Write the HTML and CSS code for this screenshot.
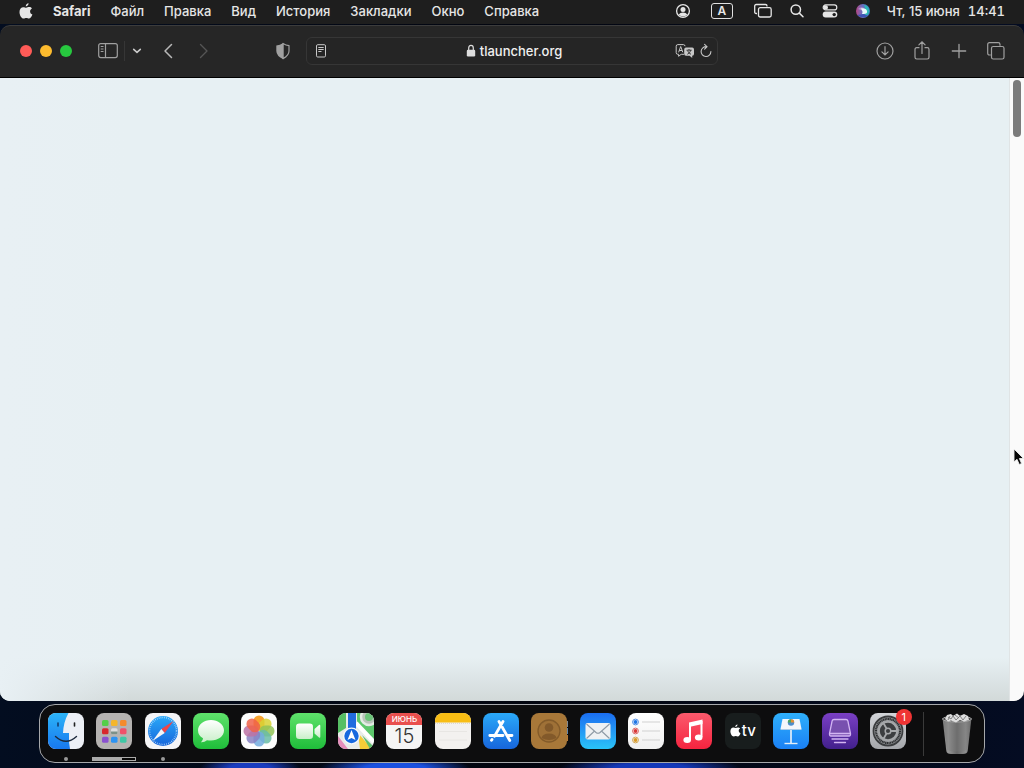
FILE: index.html
```html
<!DOCTYPE html>
<html lang="ru">
<head>
<meta charset="utf-8">
<meta name="viewport" content="width=device-width, initial-scale=1">
<title>tlauncher.org</title>
<link rel="stylesheet" href="styles.css">
</head>
<body>
<svg class="defs" aria-hidden="true">
  <defs>
    <symbol id="apple" viewBox="0 0 14 16"><path d="M9.6 0.3C9.7 1.6 8.5 3.4 6.8 3.4 6.6 2 8 .5 9.6.3ZM12.9 5.4C11.5 6.3 11 7.2 11.1 8.4 11.1 10 12 10.9 13.4 11.5 12.7 13.5 11.4 15.6 9.9 15.6 9 15.6 8.4 15 7.3 15 6.2 15 5.6 15.6 4.7 15.6 2.4 15.6.5 12 .5 9 .5 6 2.2 4.2 4.3 4.2 5.5 4.2 6.3 4.8 7.2 4.8 8 4.8 9 4.1 10.2 4.1 11.4 4.1 12.3 4.6 12.9 5.4Z" fill="currentColor"/></symbol>
    <linearGradient id="green" x2="0" y2="1"><stop stop-color="#5fe26b"/><stop offset="1" stop-color="#1fbd3a"/></linearGradient>
    <linearGradient id="white" x2="0" y2="1"><stop stop-color="#fff"/><stop offset="1" stop-color="#f0f0f0"/></linearGradient>
    <linearGradient id="bubble" x2="0" y2="1"><stop stop-color="#fff"/><stop offset="1" stop-color="#c9efc9"/></linearGradient>
    <linearGradient id="sky" x2="0" y2="1"><stop stop-color="#2aa9f8"/><stop offset="1" stop-color="#1766dc"/></linearGradient>
    <linearGradient id="keynote" x2="0" y2="1"><stop stop-color="#2fb0fb"/><stop offset="1" stop-color="#1a80f5"/></linearGradient>
    <linearGradient id="mail" x2="0" y2="1"><stop stop-color="#1b6df0"/><stop offset="1" stop-color="#2ac4f8"/></linearGradient>
    <linearGradient id="finder" x2="0" y2="1"><stop stop-color="#2cb4f8"/><stop offset="1" stop-color="#1878ef"/></linearGradient>
    <linearGradient id="red" x2="0" y2="1"><stop stop-color="#fb5a6c"/><stop offset="1" stop-color="#f5243f"/></linearGradient>
    <linearGradient id="violet" x2="0" y2="1"><stop stop-color="#7a3fc4"/><stop offset="1" stop-color="#42208c"/></linearGradient>
    <linearGradient id="steel" x2="0" y2="1"><stop stop-color="#d2d4d8"/><stop offset="1" stop-color="#a5a7ab"/></linearGradient>
    <linearGradient id="siri" x2="1" y2="0"><stop stop-color="#c2407c"/><stop offset=".45" stop-color="#6a6fc0"/><stop offset="1" stop-color="#2f83c4"/></linearGradient>
    <linearGradient id="can" x2="1" y2="0"><stop stop-color="#777"/><stop offset=".2" stop-color="#969696"/><stop offset=".5" stop-color="#686868"/><stop offset=".8" stop-color="#8e8e8e"/><stop offset="1" stop-color="#666"/></linearGradient>
    <clipPath id="tile"><rect width="36" height="36" rx="8"/></clipPath>
    <clipPath id="disc"><circle cx="8" cy="8" r="7"/></clipPath>
  </defs>
</svg>

<div class="desktop">
  <header class="menubar">
    <nav class="menus">
      <button class="menu apple" aria-label="Apple"><svg width="14" height="16"><use href="#apple"/></svg></button>
      <button class="menu app-name">Safari</button>
      <button class="menu">Файл</button>
      <button class="menu">Правка</button>
      <button class="menu">Вид</button>
      <button class="menu">История</button>
      <button class="menu">Закладки</button>
      <button class="menu">Окно</button>
      <button class="menu">Справка</button>
    </nav>
    <div class="status">
      <button aria-label="Пользователь"><svg width="16" height="16" viewBox="0 0 16 16"><circle cx="8" cy="8" r="6.4" fill="none" stroke="currentColor" stroke-width="1.3"/><circle cx="8" cy="6.4" r="2.5" fill="currentColor"/><path d="M3.7 11.6Q5 9.6 8 9.6T12.3 11.6Q10.5 13.5 8 13.5T3.7 11.6Z" fill="currentColor"/></svg></button>
      <button class="layout">A</button>
      <button aria-label="Повтор экрана"><svg width="20" height="16" viewBox="0 0 20 16" fill="none" stroke="currentColor" stroke-width="1.3"><path d="M4 10.5H3.2Q1.7 10.5 1.7 9V3Q1.7 1.5 3.2 1.5H12.5Q14 1.5 14 3V3.4"/><rect x="5.5" y="4.7" width="12.7" height="9.3" rx="1.7"/></svg></button>
      <button aria-label="Поиск"><svg width="16" height="16" viewBox="0 0 16 16" fill="none" stroke="currentColor" stroke-width="1.5"><circle cx="6.8" cy="6.6" r="4.7"/><path d="M10.3 10.1 14 13.8" stroke-linecap="round"/></svg></button>
      <button aria-label="Пункт управления"><svg width="18" height="16" viewBox="0 0 18 16"><rect x="2.2" y="1.9" width="13.6" height="5" rx="2.5" fill="none" stroke="currentColor" stroke-width="1.2"/><circle cx="4.8" cy="4.4" r="2.2" fill="currentColor"/><rect x="1.7" y="8.6" width="14.6" height="6" rx="3" fill="currentColor"/><circle cx="13.2" cy="11.6" r="1.7" fill="#1e1e1e"/></svg></button>
      <button aria-label="Siri"><svg width="16" height="16" viewBox="0 0 16 16"><g clip-path="url(#disc)"><path fill="url(#siri)" d="M0 0h16v16H0z"/><path d="M9 2Q14 3 14 8T9 12Q12 8 9 2Z" fill="#2cb9b4"/><path d="M2 12Q7 16 13 13L9 11Z" fill="#3d53b5"/><path d="M3 6Q6 3 9 5L8 8Z" fill="#b58cc4"/><path d="M5.5 5.5Q11 4.5 12 8T7 11Q8.5 8 5.5 5.5Z" fill="#e8f8fc"/></g></svg></button>
      <button class="clock"><span>Чт, 15 июня</span><time>14:41</time></button>
    </div>
  </header>

  <main class="window">
    <div class="toolbar">
      <div class="tools-left">
        <div class="lights">
          <button class="light close" aria-label="Закрыть"></button>
          <button class="light minimize" aria-label="Свернуть"></button>
          <button class="light expand" aria-label="Развернуть"></button>
        </div>
        <div class="sidebar-tools">
          <button class="tool" aria-label="Боковая панель"><svg width="20" height="18" viewBox="0 0 20 18" fill="none" stroke="currentColor" stroke-width="1.2"><rect x=".7" y="1.6" width="18.6" height="14" rx="2"/><path d="M7.5 1.6V15.6M2.7 4.5H5.5M2.7 7H5.5M2.7 9.5H5.5"/></svg></button>
          <span class="divider"></span>
          <button class="tool narrow" aria-label="Группы вкладок"><svg width="10" height="8" viewBox="0 0 10 8" fill="none" stroke="#c8c8c8" stroke-width="1.6" stroke-linecap="round" stroke-linejoin="round"><path d="M1.7 2.3 5 5.3 8.3 2.3"/></svg></button>
        </div>
        <div class="history">
          <button class="tool back" aria-label="Назад"><svg width="10" height="16" viewBox="0 0 10 16" fill="none" stroke="currentColor" stroke-width="1.5" stroke-linecap="round" stroke-linejoin="round"><path d="M8.5 1.5 2 8 8.5 14.5"/></svg></button>
          <button class="tool forward" aria-label="Вперёд" disabled><svg width="10" height="16" viewBox="0 0 10 16" fill="none" stroke="currentColor" stroke-width="1.4" stroke-linecap="round" stroke-linejoin="round"><path d="M1.5 1.5 8 8 1.5 14.5"/></svg></button>
        </div>
        <button class="tool shield" aria-label="Отчёт о конфиденциальности"><svg width="16" height="18" viewBox="0 0 16 18"><path d="M8 1.4Q11 3.2 14 3.6V9Q14 13.5 8 16.6Z" fill="none" stroke="currentColor" stroke-width="1.2" stroke-linejoin="round"/><path d="M8.3.9Q5 3.1 1.3 3.6V9Q1.3 14 8.3 17.2Z" fill="currentColor"/></svg></button>
      </div>
      <div class="address">
        <button class="mini" aria-label="Режим чтения"><svg width="12" height="14" viewBox="0 0 12 14" fill="none" stroke="currentColor"><rect x="1.5" y=".7" width="9" height="12.3" rx="1.2"/><path d="M3.3 3.5H8.7M3.3 5.5H8.7M3.3 7.5H6.5"/></svg></button>
        <button class="site"><svg width="10" height="14" viewBox="0 0 10 14"><rect x=".8" y="5.8" width="8.4" height="6.7" rx="1.2" fill="#dedede"/><path d="M2.7 6V4Q2.7 1.4 5 1.4T7.3 4V6" fill="none" stroke="#dedede" stroke-width="1.2"/></svg><span>tlauncher.org</span></button>
        <div class="page-tools">
          <button class="mini" aria-label="Перевести"><svg width="20" height="16" viewBox="0 0 20 16"><path d="M9 11.3H6.2L3.6 13.3V11.3H2.8Q1.2 11.3 1.2 9.7V3.2Q1.2 1.6 2.8 1.6H8.4Q10 1.6 10 3.2" fill="none" stroke="currentColor"/><path d="M3.6 9.3 5.7 3.5 7.8 9.3M4.3 7.5H7.1" fill="none" stroke="currentColor"/><path d="M11 4.6H17.2Q19 4.6 19 6.4V11Q19 12.8 17.2 12.8V15L14.6 12.8H11Q9.2 12.8 9.2 11V6.4Q9.2 4.6 11 4.6Z" fill="currentColor"/><path d="M11.5 7.2H16.7M14 6V7.2M12.3 11.3Q15.4 9.8 15.7 7.2M12.5 7.6Q13.5 10.2 16 11.3" fill="none" stroke="#2a2a2a" stroke-width=".9"/></svg></button>
          <button class="mini" aria-label="Обновить"><svg width="14" height="16" viewBox="0 0 14 16" fill="none" stroke="currentColor" stroke-width="1.1" stroke-linecap="round"><path d="M7.5 3.7A4.9 4.9 0 1 0 11.9 8.6M5.6 1.4 8 3.7 5.6 6.1"/></svg></button>
        </div>
      </div>
      <div class="tools-right">
        <button class="tool" aria-label="Загрузки"><svg width="20" height="20" viewBox="0 0 20 20" fill="none" stroke="currentColor" stroke-width="1.2" stroke-linecap="round"><circle cx="10" cy="10" r="8"/><path d="M10 5.7V13.7M6.9 10.9 10 14 13.1 10.9"/></svg></button>
        <button class="tool" aria-label="Поделиться"><svg width="18" height="22" viewBox="0 0 18 22" fill="none" stroke="currentColor" stroke-width="1.2" stroke-linecap="round"><path d="M6 7.7H3.7Q2 7.7 2 9.4V17.3Q2 19 3.7 19H14.3Q16 19 16 17.3V9.4Q16 7.7 14.3 7.7H12M9 13.5V2M5.9 4.9 9 1.8 12.1 4.9"/></svg></button>
        <button class="tool" aria-label="Новая вкладка"><svg width="16" height="16" viewBox="0 0 16 16" stroke="currentColor" stroke-width="1.3" stroke-linecap="round"><path d="M8 1.3V14.7M1.3 8H14.7"/></svg></button>
        <button class="tool" aria-label="Обзор вкладок"><svg width="20" height="20" viewBox="0 0 20 20" fill="none" stroke="currentColor" stroke-width="1.2"><path d="M4.8 14H3.5Q1.7 14 1.7 12.2V3.5Q1.7 1.7 3.5 1.7H12.2Q14 1.7 14 3.5V4.8"/><rect x="5.5" y="5.5" width="12.5" height="12.5" rx="1.8"/></svg></button>
      </div>
    </div>
    <div class="viewport">
      <div class="page"></div>
      <div class="scrollbar"><div class="thumb"></div></div>
    </div>
  </main>

  <footer class="dock-area">
    <div class="dock">
      <div class="apps">
        <button class="app running" aria-label="Finder"><svg viewBox="0 0 36 36"><g clip-path="url(#tile)"><path fill="#eceff5" d="M0 0h36v36H0z"/><path d="M0 0H20.5Q15.5 9 15 20H21Q20.5 29 22 36H0Z" fill="url(#finder)"/></g><path d="M10 10V13" stroke="#123d70" stroke-width="1.6" stroke-linecap="round"/><path d="M26.5 10V13" stroke="#222" stroke-width="1.6" stroke-linecap="round"/><path d="M7.5 23.5Q18 33 28.5 23.5" fill="none" stroke="#1d2a3c" stroke-width="1.4" stroke-linecap="round"/></svg></button>
        <button class="app" aria-label="Launchpad"><svg viewBox="0 0 36 36"><rect width="36" height="36" rx="8" fill="#b5b3b1"/><rect x="6" y="7" width="6.5" height="6" rx="1.5" fill="#54cf49"/><rect x="15" y="7" width="6.5" height="6" rx="1.5" fill="#f5b62b"/><rect x="24" y="7" width="6.5" height="6" rx="1.5" fill="#f58b2b"/><rect x="6" y="15.3" width="6.5" height="6" rx="1.5" fill="#d8282e"/><rect x="15" y="15.3" width="6.5" height="6" rx="1.5" fill="#dedede"/><path d="M15 18.5H21.5V20Q21.5 21.3 20 21.3H16.5Q15 21.3 15 20Z" fill="#7c9189"/><rect x="24" y="15.3" width="6.5" height="6" rx="1.5" fill="#f0506a"/><rect x="6" y="23.7" width="6.5" height="6" rx="1.5" fill="#8a51cf"/><rect x="15" y="23.7" width="6.5" height="6" rx="1.5" fill="#2d93f2"/><rect x="24" y="23.7" width="6.5" height="6" rx="1.5" fill="#3fc7a5"/></svg><span class="progress"></span></button>
        <button class="app running" aria-label="Safari"><svg viewBox="0 0 36 36"><rect width="36" height="36" rx="8" fill="#f5f5f7"/><circle cx="18" cy="18" r="15" fill="url(#sky)"/><circle cx="18" cy="18" r="13.5" fill="none" stroke="#c9e4fb" stroke-width="1.6" stroke-dasharray=".6 1.3"/><path d="M28.5 8 16.3 16 19.7 20Z" fill="#ef4648"/><path d="M7.5 28 16.3 16 19.7 20Z" fill="#f4f6f8"/></svg></button>
        <button class="app" aria-label="Сообщения"><svg viewBox="0 0 36 36"><rect width="36" height="36" rx="8" fill="url(#green)"/><path d="M18 7C25 7 31 11.3 31 17.3S25 27.6 18 27.6Q15.8 27.6 14 27.2 11.5 29.5 8 29.3 10 27.6 10 25.3 5 22.5 5 17.3C5 11.3 11 7 18 7Z" fill="url(#bubble)"/></svg></button>
        <button class="app" aria-label="Фото"><svg viewBox="0 0 36 36"><rect width="36" height="36" rx="8" fill="#fdfdfd"/><g opacity=".9"><rect x="12.5" y="2.5" width="11" height="15" rx="5.5" fill="#f79b1c"/><rect x="12.5" y="2.5" width="11" height="15" rx="5.5" fill="#d5cf20" fill-opacity=".85" transform="rotate(45 18 18)"/><rect x="12.5" y="2.5" width="11" height="15" rx="5.5" fill="#87bd45" fill-opacity=".85" transform="rotate(90 18 18)"/><rect x="12.5" y="2.5" width="11" height="15" rx="5.5" fill="#5ab69e" fill-opacity=".85" transform="rotate(135 18 18)"/><rect x="12.5" y="2.5" width="11" height="15" rx="5.5" fill="#65a3dc" fill-opacity=".85" transform="rotate(180 18 18)"/><rect x="12.5" y="2.5" width="11" height="15" rx="5.5" fill="#7c75bd" fill-opacity=".85" transform="rotate(225 18 18)"/><rect x="12.5" y="2.5" width="11" height="15" rx="5.5" fill="#b6649b" fill-opacity=".85" transform="rotate(270 18 18)"/><rect x="12.5" y="2.5" width="11" height="15" rx="5.5" fill="#ee5136" fill-opacity=".85" transform="rotate(315 18 18)"/></g></svg></button>
        <button class="app" aria-label="FaceTime"><svg viewBox="0 0 36 36"><rect width="36" height="36" rx="8" fill="url(#green)"/><rect x="6" y="10.5" width="17" height="15.5" rx="3.3" fill="url(#bubble)"/><path d="M24.5 16 29 12Q30.3 11.3 30.3 12.8V23.7Q30.3 25.2 29 24.5L24.5 20.5Z" fill="url(#bubble)"/></svg></button>
        <button class="app" aria-label="Карты"><svg viewBox="0 0 36 36"><g clip-path="url(#tile)"><path fill="#e9ece9" d="M0 0h36v36H0z"/><path d="M0 0H8V15L0 20Z" fill="#56bf63"/><path d="M19 0H36V29L19 12Z" fill="#5dc76c"/><circle cx="31" cy="4" r="8" fill="#b9c4ba" stroke="#e4ebe4" stroke-width="2.5"/><circle cx="31" cy="4" r="4" fill="#6cc479"/><path d="M18 10 36 29" stroke="#fff" stroke-width="4"/><path d="M20 20 34 36H22Z" fill="#f4cc37"/><path d="M24 22 36 34V36H32Z" fill="#60bd6c"/><path d="M0 23 10 36H0Z" fill="#e58dbb"/><path d="M10 0H18V20H10Z" fill="#216bdf"/></g><circle cx="13.5" cy="23" r="8.5" fill="#f5f8fb"/><circle cx="13.5" cy="23" r="7.2" fill="#1769df"/><path d="M13.5 17 17.5 27 13.5 25 9.5 27Z" fill="#fff"/></svg></button>
        <button class="app calendar" aria-label="Календарь"><span class="month">ИЮНЬ</span><span class="day">15</span></button>
        <button class="app" aria-label="Заметки"><svg viewBox="0 0 36 36"><g clip-path="url(#tile)"><path fill="#f3f1ef" d="M0 0h36v36H0z"/><path fill="#f8bd14" d="M0 0h36v9.5H0z"/><path d="M0 10.5H36" stroke="#dad6cf" stroke-dasharray="1 1"/><path d="M4 18.5H32M4 27H32" stroke="#e8e6e3"/></g></svg></button>
        <button class="app" aria-label="App Store"><svg viewBox="0 0 36 36"><rect width="36" height="36" rx="8" fill="url(#sky)"/><g fill="none" stroke="#fff" stroke-width="2.8" stroke-linecap="round"><path d="M16 8.5 26.8 27.5M20 8.5 11.5 23.3M6.8 22.5H20M25.5 22.5H29M9 26.5 8.5 27.3"/></g></svg></button>
        <button class="app" aria-label="Контакты"><svg viewBox="0 0 36 36"><path d="M33 8H37V14H33Z" fill="#818b94"/><path d="M33 15H37V21H33Z" fill="#6287ad"/><path d="M33 22H37V28H33Z" fill="#b77a36"/><rect width="36" height="36" rx="8" fill="#a87839"/><circle cx="18" cy="18" r="11" fill="#9f7137" stroke="#835b2a" stroke-width="1.3"/><circle cx="18" cy="14.5" r="4.3" fill="#82592a"/><path d="M10.5 25Q11.5 20.5 18 20.5T25.5 25Q18 29 10.5 25Z" fill="#82592a"/></svg></button>
        <button class="app" aria-label="Почта"><svg viewBox="0 0 36 36"><rect width="36" height="36" rx="8" fill="url(#mail)"/><rect x="5.5" y="10" width="25" height="16.5" rx="2" fill="#eef1f3"/><path d="M6.5 11 16 19.5Q18 21 20 19.5L29.5 11M6.5 25.5 14 18.5M29.5 25.5 22 18.5" fill="none" stroke="#8d9aa5" stroke-width="1.1"/></svg></button>
        <button class="app" aria-label="Напоминания"><svg viewBox="0 0 36 36"><rect width="36" height="36" rx="8" fill="url(#white)"/><path d="M14 9H32M14 18H32M14 27H32" stroke="#d1d1d1"/><g fill="none" stroke-width="1"><circle cx="7.5" cy="9" r="2.9" stroke="#4e8fe8"/><circle cx="7.5" cy="18" r="2.9" stroke="#dd6464"/><circle cx="7.5" cy="27" r="2.9" stroke="#d6a64e"/></g><circle cx="7.5" cy="9" r="1.9" fill="#1f75e5"/><circle cx="7.5" cy="18" r="1.9" fill="#d93838"/><circle cx="7.5" cy="27" r="1.9" fill="#d99a26"/></svg></button>
        <button class="app" aria-label="Музыка"><svg viewBox="0 0 36 36"><rect width="36" height="36" rx="8" fill="url(#red)"/><path d="M13 9.5 26.5 6.5V11L13 14Z" fill="#fff"/><path d="M14 10V27M25.5 8V24" stroke="#fff" stroke-width="2"/><ellipse cx="11.2" cy="27" rx="3.8" ry="3" fill="#fff"/><ellipse cx="22.7" cy="24.5" rx="3.8" ry="3" fill="#fff"/></svg></button>
        <button class="app tv" aria-label="Apple TV"><svg><use href="#apple"/></svg><span>tv</span></button>
        <button class="app" aria-label="Keynote"><svg viewBox="0 0 36 36"><rect width="36" height="36" rx="8" fill="url(#keynote)"/><path d="M9.5 6H26.5L28.5 16H7.5Z" fill="#f3f7fb"/><path d="M7.5 16H28.5V17H7.5Z" fill="#a9cce9"/><circle cx="18" cy="9.5" r="3.2" fill="#4c8ccb"/><path d="M18 9.5V6.3A3.2 3.2 0 0 1 21.2 9.5Z" fill="#e28e35"/><path d="M18 9.5H14.8A3.2 3.2 0 0 1 18 6.3Z" fill="#4da75a"/><path d="M18 17V30" stroke="#e4eef8" stroke-width="1.7"/><path d="M11.5 30.5H24.5" stroke="#e4eef8" stroke-width="1.4"/></svg></button>
        <button class="app" aria-label="Диски"><svg viewBox="0 0 36 36"><rect width="36" height="36" rx="8" fill="url(#violet)"/><path d="M12 6.5H24Q25.5 6.5 25.9 8L28.5 20.5Q28.7 23 27 23H9Q7.3 23 7.5 20.5L10.1 8Q10.5 6.5 12 6.5Z" fill="#7850af" stroke="#d2b5f2" stroke-width="1.3"/><path d="M8 20.5H28M10 26H26M12.5 29.5H23.5" stroke="#d2b5f2" stroke-width="1.3" stroke-linecap="round"/></svg></button>
        <button class="app" aria-label="Системные настройки"><svg viewBox="0 0 36 36"><rect width="36" height="36" rx="8" fill="url(#steel)"/><circle cx="18" cy="18" r="14.5" fill="#a2a4a7" stroke="#3a3c3e" stroke-width="1.8"/><circle cx="18" cy="18" r="12" fill="none" stroke="#2e3032" stroke-width="2.2" stroke-dasharray="1.3 .4"/><circle cx="18" cy="18" r="9" fill="#3c3e40" stroke="#a6a8aa" stroke-width="1.6"/><path d="M18 18H27M18 18 13.5 10.2M18 18 13.5 25.8" stroke="#a6a8aa" stroke-width="1.8"/><circle cx="18" cy="18" r="2.8" fill="#3c3e40" stroke="#a6a8aa" stroke-width="1.5"/></svg><span class="badge">1</span></button>
      </div>
      <span class="dock-divider"></span>
      <button class="trash" aria-label="Корзина"><svg width="32" height="44" viewBox="0 0 32 44"><path d="M1.5 6H30.5L26.7 39Q26.3 42 22 42H10Q5.7 42 5.3 39Z" fill="url(#can)"/><path d="M3 9H29L25.7 38Q16 41 6.3 38Z" fill="#777" fill-opacity=".35"/><ellipse cx="16" cy="7" rx="14.5" ry="3" fill="#454545" stroke="#aaa"/><path d="M4 7 6 3 10 2 12 4 16 1.5 19 4 23 2 27 4 28 8 23 9.5 19 8 15 10.5 10 8.5 7 9.5Z" fill="#dedede"/><path d="M7 5 10 7 12 4 15 8 19 4 22 8 25 4M14 3 18 6M7 8 9 4" fill="none" stroke="#777" stroke-width=".9"/></svg></button>
    </div>
  </footer>
  <svg class="cursor" width="12" height="18" viewBox="0 0 12 18" aria-hidden="true"><path d="M1 1V14L4 11.3 6.3 16.5 8.6 15.5 6.4 10.5H10.5Z" fill="#080808" stroke="#eee" stroke-width=".9"/></svg>
</div>
</body>
</html>
```
FILE: styles.css
```css
* { box-sizing: border-box; }

body {
  margin: 0;
  font-family: Inter, "Noto Sans", sans-serif;
  font-size: 13px;
  line-height: 16px;
  color: #e6e6e6;
}

button {
  flex: none;
  margin: 0;
  padding: 0;
  border: 0;
  background: none;
  color: inherit;
  font: inherit;
}

svg { display: block; }

.defs { position: absolute; width: 0; height: 0; }

.desktop {
  position: relative;
  display: flex;
  flex-direction: column;
  min-height: 100vh;
  overflow: hidden;
  background:
    radial-gradient(ellipse 50px 12px at 250px 100%, #1a3cc0 40%, transparent),
    radial-gradient(ellipse 75px 12px at 395px 100%, #1a50e0 40%, transparent),
    radial-gradient(ellipse 90px 12px at 650px 100%, #1438b8 40%, transparent),
    linear-gradient(90deg, #030d20, #02050f 50%, #040c22);
}

/* Menu bar */
.menubar {
  display: flex;
  align-items: center;
  justify-content: space-between;
  height: 24px;
  padding: 0 19px 2px;
  background: #1e1e1e;
  font-weight: 500;
}

.menus { display: flex; align-items: center; gap: 20px; }
.app-name { font-weight: 700; }
.status { display: flex; align-items: center; gap: 16px; }

.layout {
  width: 22px;
  height: 16px;
  margin: 0 4px;
  border: 1px solid #e0e0e0;
  border-radius: 3px;
  font-size: 12px;
  font-weight: 600;
  line-height: 14px;
}

.status .clock { display: flex; gap: 8px; }
.clock time { font-variant-numeric: tabular-nums; }

/* Browser window */
.window {
  display: flex;
  flex: 1;
  flex-direction: column;
  margin-top: 1px;
  border-radius: 10px;
  overflow: hidden;
  background: #262626;
}

.toolbar {
  display: grid;
  grid-template-columns: 1fr minmax(200px, 412px) 1fr;
  align-items: center;
  height: 53px;
  padding-bottom: 2px;
  border-top: 1px solid #3c3c3c;
  border-bottom: 1px solid #000;
  border-radius: 10px 10px 0 0;
  color: #a0a0a0;
}

.tools-left, .sidebar-tools, .history, .tools-right { display: flex; align-items: center; }
.tools-left { padding: 0 11px 0 20px; }
.sidebar-tools { gap: 4px; margin-left: 24px; }
.history { gap: 12px; margin-left: 11px; }
.tools-right { justify-content: flex-end; gap: 13px; padding-right: 16px; }
.lights { display: flex; gap: 8px; }

.light { width: 12px; height: 12px; border-radius: 50%; }
.close { background: #ff5b57; }
.minimize { background: #fdbb2e; }
.expand { background: #27c83f; }

.tool { display: grid; place-items: center; width: 24px; height: 28px; }
.narrow { width: 16px; }
.back { color: #b8b8b8; }
.forward { color: #555; }
.shield { margin-left: auto; }
.divider { width: 1px; height: 20px; background: #363636; }

.address {
  display: grid;
  grid-template-columns: 1fr auto 1fr;
  align-items: center;
  height: 28px;
  padding: 0 4px 0 8px;
  border: 1px solid #363636;
  border-radius: 6px;
  background: #252525;
}

.mini { justify-self: start; color: #c8c8c8; }
.site { display: flex; align-items: center; gap: 4px; color: #f0f0f0; font-weight: 500; }
.page-tools { display: flex; justify-self: end; align-items: center; gap: 4px; }

.viewport { display: flex; flex: 1; }

.page {
  flex: 1;
  background:
    linear-gradient(90deg, #e8f0f4, transparent 130px),
    linear-gradient(0deg, #d2d9d9, transparent 44px),
    #e7f0f3;
}

.scrollbar {
  width: 15px;
  padding: 2px 3px;
  border-left: 1px solid #e0e4e5;
  background: #fafafa;
}

.thumb { width: 8px; height: 57px; border-radius: 4px; background: #7b7b7b; }

/* Dock */
.dock-area { padding: 3px 39px 5px; }

.dock {
  display: flex;
  align-items: center;
  height: 59px;
  padding: 0 11px 0 8px;
  border: 1px solid #a6a8ab;
  border-radius: 16px;
  background: #0d0d0e;
}

.apps { display: flex; flex: 1; justify-content: space-between; }
.app { position: relative; width: 36px; height: 36px; border-radius: 8px; margin-bottom: 6px; }
.app > svg { width: 36px; height: 36px; overflow: visible; }

.running::after {
  position: absolute;
  bottom: -12px;
  left: 16px;
  width: 4px;
  height: 4px;
  border-radius: 50%;
  background: #999;
  content: "";
}

.progress {
  position: absolute;
  bottom: -12px;
  left: -4px;
  width: 44px;
  height: 4px;
  border: 1px solid #aaa;
  background: linear-gradient(90deg, #aaa 68%, #080808 68%);
}

.calendar {
  display: flex;
  flex-direction: column;
  overflow: hidden;
  background: #f5f5f5;
  text-align: center;
}

.month { background: #e94f4e; color: #fff; font-size: 8px; font-weight: 500; line-height: 12px; }
.day { color: #333; font-size: 20px; font-weight: 300; line-height: 22px; }

.tv {
  display: flex;
  align-items: center;
  justify-content: center;
  gap: 1px;
  background: #181d1d;
  color: #fff;
  font-size: 15px;
  font-weight: 500;
}

.tv > svg { width: 11px; height: 13px; }

.badge {
  position: absolute;
  top: -4px;
  right: -6px;
  width: 16px;
  height: 16px;
  border-radius: 50%;
  background: #ef3434;
  color: #fff;
  font-size: 11px;
  line-height: 16px;
  text-align: center;
}

.dock-divider { width: 1px; height: 44px; margin: 0 17px; background: #3a3a3a; }

.cursor { position: absolute; top: 448px; right: -1px; }
```
